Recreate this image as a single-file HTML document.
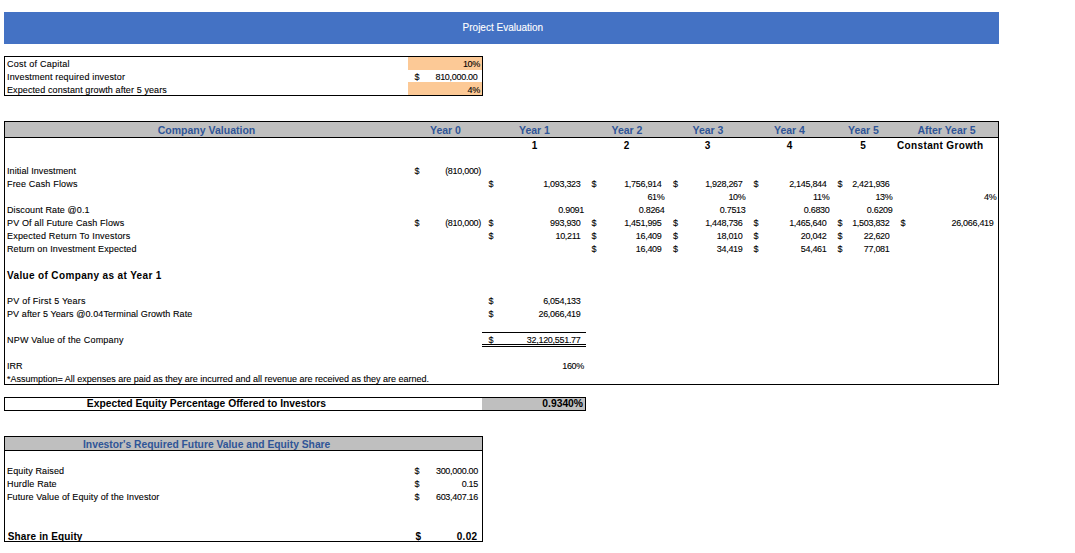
<!DOCTYPE html>
<html><head><meta charset="utf-8"><style>
html,body{margin:0;padding:0;background:#fff;width:1075px;height:553px;overflow:hidden;position:relative}
div{position:absolute}
span{position:absolute;white-space:nowrap}
.t{font-family:"Liberation Sans",sans-serif;font-size:9px;line-height:13px;color:#000;margin-top:1px;-webkit-text-stroke:0.1px currentColor}
.num{letter-spacing:-0.3px}
.b{font-family:"Liberation Sans",sans-serif;font-size:10px;line-height:13px;color:#000;font-weight:bold;margin-top:1px}
.h{font-family:"Liberation Sans",sans-serif;font-size:10.5px;line-height:15px;color:#2F5597;font-weight:bold}
.h2{font-family:"Liberation Sans",sans-serif;font-size:10.3px;line-height:15px;color:#000;font-weight:bold}
</style></head><body>
<div style="left:4px;top:12px;width:995px;height:32px;background:#4472C4"></div>
<span class="t" style="left:352.9px;width:300px;text-align:center;top:20px;color:#fff;font-size:10px">Project Evaluation</span>
<div style="left:408px;top:57px;width:74px;height:13px;background:#FCC996"></div>
<div style="left:408px;top:82px;width:74px;height:13px;background:#FCC996"></div>
<div style="left:4px;top:56px;width:479px;height:40px;border:1px solid #000;box-sizing:border-box"></div>
<span class="t" style="left:7px;top:57px;letter-spacing:0.25px">Cost of Capital</span>
<span class="t" style="left:7px;top:70px;letter-spacing:0.16px">Investment required investor</span>
<span class="t" style="left:7px;top:83px;letter-spacing:0.10px">Expected constant growth after 5 years</span>
<span class="t num" style="right:595px;top:57px;">10%</span>
<span class="t" style="left:414.5px;top:70px;">$</span>
<span class="t num" style="right:597.5px;top:70px;">810,000.00</span>
<span class="t num" style="right:595px;top:83px;">4%</span>
<div style="left:4px;top:121px;width:995px;height:264px;border:1px solid #000;box-sizing:border-box"></div>
<div style="left:5px;top:122px;width:993px;height:15px;background:#BFBFBF;border-bottom:1px solid #000"></div>
<span class="h" style="left:56.5px;width:300px;text-align:center;top:123px;">Company Valuation</span>
<span class="h" style="left:295.5px;width:300px;text-align:center;top:123px;">Year 0</span>
<span class="h" style="left:384.5px;width:300px;text-align:center;top:123px;">Year 1</span>
<span class="h" style="left:477.0px;width:300px;text-align:center;top:123px;">Year 2</span>
<span class="h" style="left:558.0px;width:300px;text-align:center;top:123px;">Year 3</span>
<span class="h" style="left:639.5px;width:300px;text-align:center;top:123px;">Year 4</span>
<span class="h" style="left:713.5px;width:300px;text-align:center;top:123px;">Year 5</span>
<span class="h" style="left:796.5px;width:300px;text-align:center;top:123px;">After Year 5</span>
<span class="b" style="left:384.5px;width:300px;text-align:center;top:138px;">1</span>
<span class="b" style="left:476.5px;width:300px;text-align:center;top:138px;">2</span>
<span class="b" style="left:557.5px;width:300px;text-align:center;top:138px;">3</span>
<span class="b" style="left:639.5px;width:300px;text-align:center;top:138px;">4</span>
<span class="b" style="left:713.0px;width:300px;text-align:center;top:138px;">5</span>
<span class="b" style="left:897px;top:138px;letter-spacing:0.36px">Constant Growth</span>
<span class="t" style="left:7px;top:164px;letter-spacing:0.08px">Initial Investment</span>
<span class="t" style="left:7px;top:177px;letter-spacing:0.17px">Free Cash Flows</span>
<span class="t" style="left:7px;top:203px;letter-spacing:0.11px">Discount Rate @0.1</span>
<span class="t" style="left:7px;top:216px;letter-spacing:0.14px">PV Of all Future Cash Flows</span>
<span class="t" style="left:7px;top:229px;letter-spacing:0.20px">Expected Return To Investors</span>
<span class="t" style="left:7px;top:242px;letter-spacing:0.12px">Return on Investment Expected</span>
<span class="b" style="left:7px;top:268px;letter-spacing:0.36px">Value of Company as at Year 1</span>
<span class="t" style="left:7px;top:294px;letter-spacing:0.22px">PV of First 5 Years</span>
<span class="t" style="left:7px;top:307px;letter-spacing:0.10px">PV after 5 Years @0.04Terminal Growth Rate</span>
<span class="t" style="left:7px;top:333px;letter-spacing:0.20px">NPW Value of the Company</span>
<span class="t" style="left:7px;top:359px;">IRR</span>
<span class="t" style="left:7px;top:372px;">*Assumption= All expenses are paid as they are incurred and all revenue are received as they are earned.</span>
<span class="t" style="left:414.5px;top:164px;">$</span>
<span class="t num" style="right:594px;top:164px;">(810,000)</span>
<span class="t" style="left:488.5px;top:177px;">$</span>
<span class="t num" style="right:494.5px;top:177px;">1,093,323</span>
<span class="t" style="left:591.5px;top:177px;">$</span>
<span class="t num" style="right:413.5px;top:177px;">1,756,914</span>
<span class="t" style="left:673px;top:177px;">$</span>
<span class="t num" style="right:332.5px;top:177px;">1,928,267</span>
<span class="t" style="left:753.5px;top:177px;">$</span>
<span class="t num" style="right:248.5px;top:177px;">2,145,844</span>
<span class="t" style="left:837.5px;top:177px;">$</span>
<span class="t num" style="right:185.5px;top:177px;">2,421,936</span>
<span class="t num" style="right:410.5px;top:190px;">61%</span>
<span class="t num" style="right:329.5px;top:190px;">10%</span>
<span class="t num" style="right:245.5px;top:190px;">11%</span>
<span class="t num" style="right:182.5px;top:190px;">13%</span>
<span class="t num" style="right:78.5px;top:190px;">4%</span>
<span class="t num" style="right:491px;top:203px;">0.9091</span>
<span class="t num" style="right:410.5px;top:203px;">0.8264</span>
<span class="t num" style="right:329.5px;top:203px;">0.7513</span>
<span class="t num" style="right:245.5px;top:203px;">0.6830</span>
<span class="t num" style="right:182.5px;top:203px;">0.6209</span>
<span class="t" style="left:414.5px;top:216px;">$</span>
<span class="t num" style="right:594px;top:216px;">(810,000)</span>
<span class="t" style="left:488.5px;top:216px;">$</span>
<span class="t num" style="right:494.5px;top:216px;">993,930</span>
<span class="t" style="left:591.5px;top:216px;">$</span>
<span class="t num" style="right:413.5px;top:216px;">1,451,995</span>
<span class="t" style="left:673px;top:216px;">$</span>
<span class="t num" style="right:332.5px;top:216px;">1,448,736</span>
<span class="t" style="left:753.5px;top:216px;">$</span>
<span class="t num" style="right:248.5px;top:216px;">1,465,640</span>
<span class="t" style="left:837.5px;top:216px;">$</span>
<span class="t num" style="right:185.5px;top:216px;">1,503,832</span>
<span class="t" style="left:900.5px;top:216px;">$</span>
<span class="t num" style="right:81.5px;top:216px;">26,066,419</span>
<span class="t" style="left:488.5px;top:229px;">$</span>
<span class="t num" style="right:494.5px;top:229px;">10,211</span>
<span class="t" style="left:591.5px;top:229px;">$</span>
<span class="t num" style="right:413.5px;top:229px;">16,409</span>
<span class="t" style="left:673px;top:229px;">$</span>
<span class="t num" style="right:332.5px;top:229px;">18,010</span>
<span class="t" style="left:753.5px;top:229px;">$</span>
<span class="t num" style="right:248.5px;top:229px;">20,042</span>
<span class="t" style="left:837.5px;top:229px;">$</span>
<span class="t num" style="right:185.5px;top:229px;">22,620</span>
<span class="t" style="left:591.5px;top:242px;">$</span>
<span class="t num" style="right:413.5px;top:242px;">16,409</span>
<span class="t" style="left:673px;top:242px;">$</span>
<span class="t num" style="right:332.5px;top:242px;">34,419</span>
<span class="t" style="left:753.5px;top:242px;">$</span>
<span class="t num" style="right:248.5px;top:242px;">54,461</span>
<span class="t" style="left:837.5px;top:242px;">$</span>
<span class="t num" style="right:185.5px;top:242px;">77,081</span>
<span class="t" style="left:488.5px;top:294px;">$</span>
<span class="t num" style="right:494.5px;top:294px;">6,054,133</span>
<span class="t" style="left:488.5px;top:307px;">$</span>
<span class="t num" style="right:494.5px;top:307px;">26,066,419</span>
<span class="t" style="left:488.5px;top:333px;">$</span>
<span class="t num" style="right:494.5px;top:333px;">32,120,551.77</span>
<div style="left:482px;top:332px;width:104px;height:1px;background:#000"></div>
<div style="left:482px;top:344px;width:104px;height:1px;background:#000"></div>
<div style="left:482px;top:346px;width:104px;height:1px;background:#000"></div>
<span class="t num" style="right:491px;top:359px;">160%</span>
<div style="left:482px;top:398px;width:103px;height:12px;background:#BFBFBF"></div>
<div style="left:4px;top:397px;width:582px;height:14px;border:1px solid #000;box-sizing:border-box"></div>
<span class="h2" style="left:86.8px;top:396px;">Expected Equity Percentage Offered to Investors</span>
<span class="h2" style="right:492px;top:395.8px;">0.9340%</span>
<div style="left:4px;top:436px;width:479px;height:106px;border:1px solid #000;box-sizing:border-box"></div>
<div style="left:5px;top:437px;width:477px;height:13px;background:#BFBFBF;border-bottom:1px solid #000"></div>
<span class="h2" style="left:83px;top:436.8px;color:#2F5597">Investor's Required Future Value and Equity Share</span>
<span class="t" style="left:7px;top:464px;letter-spacing:0.13px">Equity Raised</span>
<span class="t" style="left:414.5px;top:464px;">$</span>
<span class="t num" style="right:597px;top:464px;">300,000.00</span>
<span class="t" style="left:7px;top:477px;letter-spacing:0.16px">Hurdle Rate</span>
<span class="t" style="left:414.5px;top:477px;">$</span>
<span class="t num" style="right:597px;top:477px;">0.15</span>
<span class="t" style="left:7px;top:490px;letter-spacing:0.12px">Future Value of Equity of the Investor</span>
<span class="t" style="left:414.5px;top:490px;">$</span>
<span class="t num" style="right:597px;top:490px;">603,407.16</span>
<span class="b" style="left:7.8px;top:529px;letter-spacing:0.13px">Share in Equity</span>
<span class="b" style="left:415.5px;top:529px;">$</span>
<span class="b" style="right:597.5px;top:529px;letter-spacing:0.33px">0.02</span>
</body></html>
